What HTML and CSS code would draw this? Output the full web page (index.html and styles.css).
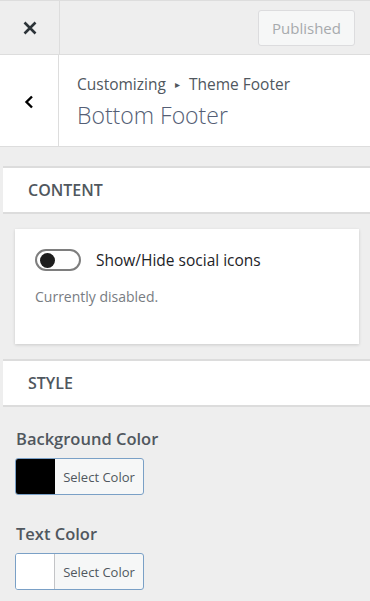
FILE: index.html
```html
<!DOCTYPE html>
<html>
<head>
<meta charset="utf-8">
<link rel="stylesheet" href="styles.css">
</head>
<body>
<div class="topbar">
  <div class="close">
    <svg width="16" height="16" viewBox="0 0 16 16"><path d="M2.5 2.5 L13.5 13.5 M13.5 2.5 L2.5 13.5" stroke="#2c3338" stroke-width="2.6" stroke-linecap="butt"/></svg>
  </div>
  <div class="publish-wrap">
    <button class="publish">Published</button>
  </div>
</div>
<div class="section-header">
  <div class="back">
    <svg width="12" height="14" viewBox="0 0 12 14"><path d="M9 1.5 L3.5 7 L9 12.5" fill="none" stroke="#000" stroke-width="2.4"/></svg>
  </div>
  <div class="titles">
    <div class="crumb">Customizing <span class="arrow">▸</span> Theme Footer</div>
    <div class="title">Bottom Footer</div>
  </div>
</div>
<div class="group-title">CONTENT</div>
<div class="card">
  <div class="toggle-row">
    <span class="toggle"><span class="knob"></span></span>
    <span class="toggle-label">Show/Hide social icons</span>
  </div>
  <div class="desc">Currently disabled.</div>
</div>
<div class="group-title style-title">STYLE</div>
<div class="control first">
  <div class="label">Background Color</div>
  <button class="color-btn"><span class="swatch black"></span><span class="btn-text">Select Color</span></button>
</div>
<div class="control">
  <div class="label">Text Color</div>
  <button class="color-btn"><span class="swatch white"></span><span class="btn-text">Select Color</span></button>
</div>
</body>
</html>
```
FILE: styles.css
```css
html, body {
  margin: 0;
  padding: 0;
}
body {
  background: #eeeeee;
  font-family: "Open Sans", "Noto Sans", sans-serif;
  color: #50575e;
  width: 370px;
  height: 601px;
  overflow: hidden;
}
.topbar {
  display: flex;
  height: 53px;
  border-top: 1px solid #dddddd;
  border-bottom: 1px solid #dddddd;
  background: #eeeeee;
}
.close {
  width: 59px;
  border-right: 1px solid #dddddd;
  display: flex;
  align-items: center;
  justify-content: center;
}
.publish-wrap {
  flex: 1;
  display: flex;
  justify-content: flex-end;
  align-items: center;
  padding-right: 15px;
  padding-top: 1px;
}
.publish {
  width: 97px;
  height: 36px;
  border: 1px solid #dcdcde;
  border-radius: 3px;
  background: #f6f7f7;
  color: #a7aaad;
  font-family: "Open Sans", sans-serif;
  font-size: 15px;
  padding: 0;
}
.section-header {
  display: flex;
  height: 91px;
  background: #ffffff;
  border-bottom: 1px solid #dddddd;
}
.back {
  width: 59px;
  border-right: 1px solid #dddddd;
  display: flex;
  align-items: center;
  justify-content: center;
  padding-top: 2px;
  box-sizing: border-box;
}
.titles {
  padding-left: 18px;
  padding-top: 18px;
}
.crumb {
  font-size: 15.5px;
  line-height: 22px;
  color: #50575e;
}
.arrow {
  font-size: 10px;
  margin: 0 5px;
  position: relative;
  top: -2px;
}
.title {
  font-size: 23px;
  font-weight: 300;
  line-height: 32px;
  color: #545e75;
  margin-top: 2px;
}
.group-title {
  margin: 19px 0 0 3px;
  height: 44px;
  line-height: 44px;
  background: #ffffff;
  border-top: 2px solid #dcdcdc;
  border-bottom: 2px solid #dcdcdc;
  padding-left: 25px;
  font-size: 16px;
  font-weight: 600;
  color: #50575e;
}
.style-title {
  margin-top: 15px;
}
.card {
  margin: 15px 11px 0 15px;
  height: 115px;
  background: #ffffff;
  box-shadow: 0 1px 3px rgba(0, 0, 0, 0.15);
  padding: 20px 0 0 20px;
  box-sizing: border-box;
}
.toggle-row {
  display: flex;
  align-items: center;
  gap: 15px;
}
.toggle {
  width: 46px;
  height: 22px;
  border: 2px solid #7e7e7e;
  border-radius: 12px;
  box-sizing: border-box;
  display: flex;
  align-items: center;
  padding-left: 3px;
}
.knob {
  width: 15px;
  height: 15px;
  border-radius: 50%;
  background: #1e1e1e;
}
.toggle-label {
  font-size: 15.5px;
  color: #1d2327;
}
.desc {
  margin-top: 16px;
  font-size: 14px;
  color: #787c82;
}
.control {
  padding-left: 15px;
}
.control.first {
  margin-top: 21px;
}
.label {
  font-size: 16.5px;
  font-weight: 600;
  line-height: 22px;
  color: #50575e;
  margin-left: 1px;
}
.control + .control {
  margin-top: 28px;
}
.color-btn {
  display: flex;
  margin-top: 8px;
  width: 129px;
  height: 37px;
  padding: 0;
  border: 1px solid #7aa0c6;
  border-radius: 3px;
  background: #f6f7f7;
  overflow: hidden;
  font-family: "Open Sans", sans-serif;
}
.swatch {
  width: 38px;
  height: 100%;
  border-right: 1px solid #c3c4c7;
}
.swatch.black {
  background: #000000;
  border-right-color: #000000;
}
.swatch.white {
  background: #ffffff;
}
.btn-text {
  flex: 1;
  align-self: center;
  font-size: 13px;
  color: #50575e;
  text-align: center;
}
```
